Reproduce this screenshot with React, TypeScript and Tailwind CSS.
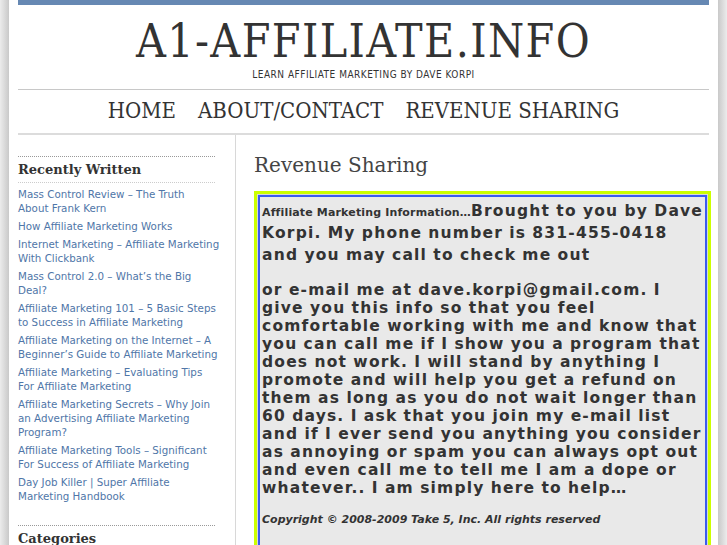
import React from "react";

const links: string[][] = [
  ["Mass Control Review – The Truth", "About Frank Kern"],
  ["How Affiliate Marketing Works"],
  ["Internet Marketing – Affiliate Marketing", "With Clickbank"],
  ["Mass Control 2.0 – What’s the Big", "Deal?"],
  ["Affiliate Marketing 101 – 5 Basic Steps", "to Success in Affiliate Marketing"],
  ["Affiliate Marketing on the Internet – A", "Beginner’s Guide to Affiliate Marketing"],
  ["Affiliate Marketing – Evaluating Tips", "For Affiliate Marketing"],
  ["Affiliate Marketing Secrets – Why Join", "an Advertising Affiliate Marketing", "Program?"],
  ["Affiliate Marketing Tools – Significant", "For Success of Affiliate Marketing"],
  ["Day Job Killer | Super Affiliate", "Marketing Handbook"],
];

const serifCond = "font-['DejaVu_Serif_Condensed','DejaVu_Serif',serif] [font-stretch:condensed]";

export default function App() {
  return (
    <div className="min-h-[545px] h-[545px] overflow-hidden flex bg-[#e6e6e6]">
      <div className="w-[9px] shrink-0 bg-gradient-to-r from-[#ececec] to-[#c9c9c9]" />
      <div className="flex-1 bg-white px-[9px]">
        <div className="h-[5px] bg-[#6688b3]" />
        <div className="flex flex-col items-center">
          <div className={`${serifCond} text-[46px] leading-none text-[#333] mt-[13px] tracking-[1.4px]`}>
            A1-AFFILIATE.INFO
          </div>
          <div className="font-['DejaVu_Sans_Condensed','DejaVu_Sans',sans-serif] [font-stretch:condensed] text-[10px] tracking-[0.5px] text-[#333] mt-[6px] leading-none">
            LEARN AFFILIATE MARKETING BY DAVE KORPI
          </div>
        </div>
        <div className="h-px bg-[#c8c8c8] mt-[9px]" />
        <div className={`flex justify-center gap-[22px] ${serifCond} text-[22px] text-[#333] leading-none pt-[10px] pb-[11px]`}>
          <span>HOME</span>
          <span>ABOUT/CONTACT</span>
          <span>REVENUE SHARING</span>
        </div>
        <div className="h-[2px] bg-[#dcdcdc]" />
        <div className="flex">
          <div className="w-[218px] shrink-0 border-r border-[#d8d8d8] pr-[20px] pt-[21px]">
            <div className="border-t border-dotted border-[#999]" />
            <div className="font-['DejaVu_Serif',serif] font-bold text-[13px] text-[#333] leading-none pt-[6px] pb-[6px] border-b border-dotted border-[#ccc]">
              Recently Written
            </div>
            <div className="flex flex-col gap-[4px] mt-[4px] font-['DejaVu_Sans',sans-serif] text-[10.3px] leading-[14px] text-[#4f76a8]">
              {links.map((l, i) => (
                <div key={i}>
                  {l.map((s, j) => (
                    <div key={j} className="whitespace-nowrap">{s}</div>
                  ))}
                </div>
              ))}
            </div>
            <div className="border-t border-dotted border-[#999] mt-[22px]" />
            <div className="font-['DejaVu_Serif',serif] font-bold text-[13px] text-[#333] leading-none pt-[6px]">
              Categories
            </div>
          </div>
          <div className="flex-1 pl-[18px] pt-[20px] mr-[-2px]">
            <div className="font-['DejaVu_Serif',serif] text-[20px] text-[#444] leading-none">
              Revenue Sharing
            </div>
            <div className="mt-[16px] border-[3px] border-[#ccff00] bg-[#d8d8d8] p-px">
              <div className="border-2 border-[#3a5cf0] bg-[#e9e9e9] pl-[2px] pr-0 pt-[3px] pb-[40px] font-['DejaVu_Sans',sans-serif] font-bold text-[#333]">
                <p className="text-[15.5px] leading-[22px] tracking-[1.2px] [word-spacing:-0.4px]">
                  <span className="text-[11px] leading-[12px] tracking-[0.15px] [word-spacing:0px]">Affiliate Marketing Information…</span>Brought to you by Dave Korpi. My phone number is 831-455-0418 and you may call to check me out
                </p>
                <p className="text-[15.5px] leading-[18px] mt-[15px] tracking-[1.2px] [word-spacing:-0.4px]">
                  or e-mail me at dave.korpi@gmail.com. I give you this info so that you feel comfortable working with me and know that you can call me if I show you a program that does not work. I will stand by anything I promote and will help you get a refund on them as long as you do not wait longer than 60 days. I ask that you join my e-mail list and if I ever send you anything you consider as annoying or spam you can always opt out and even call me to tell me I am a dope or whatever.. I am simply here to help…
                </p>
                <p className="text-[11px] italic mt-[16px] leading-[14px]">
                  Copyright © 2008-2009 Take 5, Inc. All rights reserved
                </p>
              </div>
            </div>
          </div>
        </div>
      </div>
      <div className="w-[9px] shrink-0 bg-gradient-to-r from-[#c9c9c9] to-[#ececec]" />
    </div>
  );
}
